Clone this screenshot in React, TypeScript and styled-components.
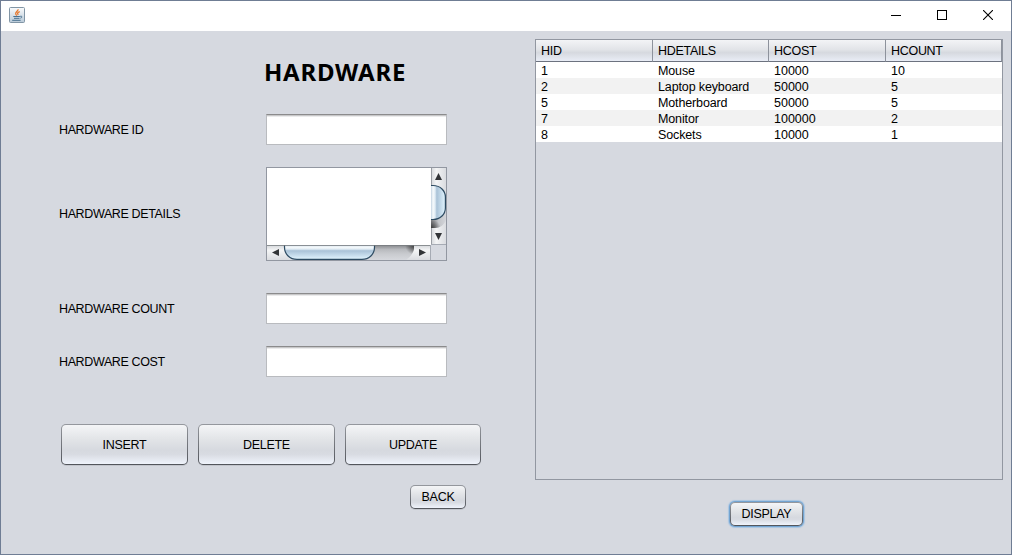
import React from "react";
import styled, { createGlobalStyle } from "styled-components";

const GlobalStyle = createGlobalStyle`
  *, *::before, *::after { box-sizing: border-box; }
  body { margin: 0; }
`;

const Window = styled.div`
  width: 1012px;
  height: 555px;
  display: flex;
  flex-direction: column;
  border: 1px solid #6f7d94;
  background: #d6d9e0;
  color: #000;
  font: 12.5px/16px "Liberation Sans", Arial, sans-serif;
  letter-spacing: -0.37px;
`;

const TitleBar = styled.header`
  flex: none;
  height: 30px;
  display: flex;
  justify-content: space-between;
  background: #fff;
  padding-left: 8px;

  > svg { margin-top: 6px; }
`;

const WindowControls = styled.div`
  display: flex;
`;

const ControlButton = styled.button`
  width: 46px;
  height: 28px;
  padding: 0;
  border: 0;
  background: none;
  display: grid;
  place-items: center;
`;

const Content = styled.main`
  flex: 1;
  display: flex;
`;

const FormPane = styled.section`
  width: 534px;
  padding-left: 58px;
`;

const Heading = styled.h1`
  margin: 25px 0 26px 205px;
  height: 32px;
  font: bold 24px/32px "Noto Sans", Tahoma, sans-serif;
  letter-spacing: 0.75px;
  white-space: nowrap;
`;

const FormRow = styled.div<{ $gap: number }>`
  display: flex;
  align-items: center;
  margin-bottom: ${(p) => p.$gap}px;
`;

const Label = styled.label`
  width: 207px;
  white-space: nowrap;
`;

const TextField = styled.input`
  width: 181px;
  height: 31px;
  border: 1px solid #b9bbbf;
  border-top-color: #8b8b8c;
  border-radius: 0;
  outline: 0;
  padding: 0 6px;
  background: linear-gradient(#c8c8c9 0 1px, #ebebec 1px 2px, #fff 2px);
  font: inherit;
`;

const ScrollPane = styled.div`
  width: 181px;
  height: 94px;
  border: 1px solid #9297a1;
  display: grid;
  grid-template: 77px 15px / 164px 15px;

  > svg { display: block; }
`;

const TextArea = styled.textarea`
  width: 164px;
  height: 77px;
  border: 0;
  outline: 0;
  padding: 0;
  resize: none;
  overflow: hidden;
  background: #fff;
  font: inherit;
`;

const ButtonRow = styled.div`
  display: flex;
  gap: 10px;
  padding-left: 2px;
`;

const BackRow = styled.div`
  margin: 20px 0 0 351px;
`;

const Button = styled.button<{ $width: number; $height: number; $focused?: boolean }>`
  display: block;
  width: ${(p) => p.$width}px;
  height: ${(p) => p.$height}px;
  padding: 0;
  border: 1px solid transparent;
  border-radius: 5px;
  color: #000;
  font: inherit;
  letter-spacing: -0.3px;
  white-space: nowrap;
  background:
    linear-gradient(#f4f5f7 0%, #e3e5e8 35%, #d6d9df 65%, #d8dbe2 75%, #eff3fb 100%) padding-box,
    linear-gradient(#95989e, #52555b) border-box;
  box-shadow: ${(p) => (p.$focused ? "0 0 0 1px #73a4d1, 0 0 1px 2px #a8c5e2" : "0 1px 0 #c2c5cc")};
`;

const DataPane = styled.section`
  padding-top: 8px;
  display: flex;
  flex-direction: column;
  align-items: flex-start;
`;

const TableFrame = styled.div`
  width: 468px;
  height: 441px;
  border: 1px solid #9297a1;
  margin-bottom: 22px;
`;

const Table = styled.table`
  width: 466px;
  table-layout: fixed;
  border-collapse: separate;
  border-spacing: 0;
`;

const HeaderCell = styled.th<{ $width: number }>`
  width: ${(p) => p.$width}px;
  height: 22px;
  padding: 1px 0 0 5px;
  line-height: 20px;
  text-align: left;
  font-weight: normal;
  letter-spacing: -0.3px;
  border-right: 1px solid #8d929c;
  border-bottom: 1px solid #6c727f;
  background: linear-gradient(#f3f4f6, #e2e4e8 45%, #d6d9df 60%, #e9edf6);
`;

const Row = styled.tr`
  background: #fff;
  &:nth-child(even) { background: #f2f2f2; }
`;

const Cell = styled.td<{ $spacing: number }>`
  height: 16px;
  padding: 2px 0 0 5px;
  line-height: 14px;
  letter-spacing: ${(p) => p.$spacing}px;
  white-space: nowrap;
`;

const DisplayHolder = styled.div`
  padding-left: 195px;
`;

const columns = [
  { title: "HID", width: 117 },
  { title: "HDETAILS", width: 116 },
  { title: "HCOST", width: 117 },
  { title: "HCOUNT", width: 116 },
];

const records = [
  ["1", "Mouse", "10000", "10"],
  ["2", "Laptop keyboard", "50000", "5"],
  ["5", "Motherboard", "50000", "5"],
  ["7", "Monitor", "100000", "2"],
  ["8", "Sockets", "10000", "1"],
];

const JavaIcon = () => (
  <svg width="16" height="16" viewBox="0 0 16 16" fill="none">
    <defs>
      <linearGradient id="javaTile" x1="0" y1="0" x2="0" y2="1">
        <stop offset="0" stopColor="#fafbfc" />
        <stop offset="1" stopColor="#b9cad8" />
      </linearGradient>
    </defs>
    <rect x="0.5" y="0.5" width="15" height="15" rx="1" fill="url(#javaTile)" stroke="#8195a5" />
    <path d="M9 2.200C9.800 4 4.400 5.400 7.800 8.600M10.800 4.600C8.600 5.400 8 6.200 9.200 8" stroke="#e7772b" strokeWidth="1.3" />
    <path d="M4.300 9.500h6.600M5 11.300h5.500M3.200 13.300h8.400M11.200 9.300c2.200-.5 2.300 1.300.2 1.900" stroke="#48708f" />
  </svg>
);

const VerticalScrollBar = () => (
  <svg width="15" height="77" viewBox="0 0 15 77" fill="none">
    <defs>
      <linearGradient id="vButton">
        <stop offset="0" stopColor="#d3d6da" />
        <stop offset="0.35" stopColor="#f4f5f6" />
        <stop offset="1" stopColor="#dadce0" />
      </linearGradient>
      <linearGradient id="vThumb">
        <stop offset="0" stopColor="#c3d3e1" />
        <stop offset="0.14" stopColor="#f6fafc" />
        <stop offset="0.28" stopColor="#e2edf5" />
        <stop offset="0.4" stopColor="#a9c2d7" />
        <stop offset="1" stopColor="#e2f5ff" />
      </linearGradient>
      <linearGradient id="vTrack">
        <stop offset="0" stopColor="#85878a" />
        <stop offset="0.5" stopColor="#c2c4c8" />
        <stop offset="1" stopColor="#d3d5da" />
      </linearGradient>
      <radialGradient id="vShade" gradientUnits="userSpaceOnUse" cx="0" cy="61" r="10">
        <stop offset="0" stopColor="#2b2b2b" stopOpacity="0.9" />
        <stop offset="1" stopColor="#2b2b2b" stopOpacity="0" />
      </radialGradient>
    </defs>
    <rect width="15" height="77" fill="url(#vButton)" />
    <path d="M0 44h15v8C13 57 9 60 4 60H0z" fill="url(#vTrack)" />
    <path d="M0 44h15v8C13 57 9 60 4 60H0z" fill="url(#vShade)" />
    <path d="M0 17.500h2C9.500 17.500 14.400 23 14.400 29v11C14.400 46 9.500 51.500 2 51.500H0z" fill="url(#vThumb)" />
    <path d="M0 17.500h2C9.500 17.500 14.400 23 14.400 29v11C14.400 46 9.500 51.500 2 51.500H0" stroke="#2d4b62" strokeWidth="1.2" />
    <path d="M0.500 0v17M0.500 60v17" stroke="#999da3" />
    <path d="M0 76.500h15" stroke="#a6abb4" />
    <path d="M7.500 5L11 12H4z" fill="#333538" />
    <path d="M7.500 72L4 65h7z" fill="#333538" />
  </svg>
);

const HorizontalScrollBar = () => (
  <svg width="164" height="15" viewBox="0 0 164 15" fill="none">
    <defs>
      <linearGradient id="hButton" x1="0" y1="0" x2="0" y2="1">
        <stop offset="0" stopColor="#d3d6da" />
        <stop offset="0.35" stopColor="#f4f5f6" />
        <stop offset="1" stopColor="#dadce0" />
      </linearGradient>
      <linearGradient id="hThumb" x1="0" y1="0" x2="0" y2="1">
        <stop offset="0" stopColor="#c3d3e1" />
        <stop offset="0.14" stopColor="#f6fafc" />
        <stop offset="0.28" stopColor="#e2edf5" />
        <stop offset="0.4" stopColor="#a9c2d7" />
        <stop offset="1" stopColor="#e2f5ff" />
      </linearGradient>
      <linearGradient id="hTrack" x1="0" y1="0" x2="0" y2="1">
        <stop offset="0" stopColor="#85878a" />
        <stop offset="0.3" stopColor="#b8babe" />
        <stop offset="0.6" stopColor="#c9cbcf" />
        <stop offset="1" stopColor="#d6d8dd" />
      </linearGradient>
      <radialGradient id="hShade" gradientUnits="userSpaceOnUse" cx="148" cy="0" r="10">
        <stop offset="0" stopColor="#2b2b2b" stopOpacity="0.9" />
        <stop offset="1" stopColor="#2b2b2b" stopOpacity="0" />
      </radialGradient>
    </defs>
    <rect width="164" height="15" fill="url(#hButton)" />
    <path d="M94 0h53v4C146 9 143 12 139 15H94z" fill="url(#hTrack)" />
    <path d="M94 0h53v4C146 9 143 12 139 15H94z" fill="url(#hShade)" />
    <path d="M17.500 0v2C17.500 9.500 23 14.400 30 14.400h65C102 14.400 107.500 9.500 107.500 2V0z" fill="url(#hThumb)" />
    <path d="M17.500 0v2C17.500 9.500 23 14.400 30 14.400h65C102 14.400 107.500 9.500 107.500 2V0" stroke="#2d4b62" strokeWidth="1.2" />
    <path d="M0 0.500h164" stroke="#777c80" strokeOpacity="0.8" />
    <path d="M163.500 0v15" stroke="#a6abb4" />
    <path d="M5 7.500L12 4v7z" fill="#333538" />
    <path d="M159 7.500L152 4v7z" fill="#333538" />
  </svg>
);

export default function App() {
  return (
    <>
      <GlobalStyle />
      <Window>
        <TitleBar>
          <JavaIcon />
          <WindowControls>
            <ControlButton aria-label="Minimize">
              <svg width="10" height="10"><path d="M0 5.500h10" stroke="#000" /></svg>
            </ControlButton>
            <ControlButton aria-label="Maximize">
              <svg width="10" height="10"><rect x="0.5" y="0.5" width="9" height="9" fill="none" stroke="#000" /></svg>
            </ControlButton>
            <ControlButton aria-label="Close">
              <svg width="10" height="10"><path d="M0 0l10 10M10 0L0 10" stroke="#000" strokeWidth="1.1" /></svg>
            </ControlButton>
          </WindowControls>
        </TitleBar>
        <Content>
          <FormPane>
            <Heading>HARDWARE</Heading>
            <FormRow $gap={22}>
              <Label htmlFor="hid">HARDWARE ID</Label>
              <TextField id="hid" />
            </FormRow>
            <FormRow $gap={32}>
              <Label htmlFor="details">HARDWARE DETAILS</Label>
              <ScrollPane>
                <TextArea id="details" />
                <VerticalScrollBar />
                <HorizontalScrollBar />
              </ScrollPane>
            </FormRow>
            <FormRow $gap={22}>
              <Label htmlFor="count">HARDWARE COUNT</Label>
              <TextField id="count" />
            </FormRow>
            <FormRow $gap={47}>
              <Label htmlFor="cost">HARDWARE COST</Label>
              <TextField id="cost" />
            </FormRow>
            <ButtonRow>
              <Button $width={127} $height={41}>INSERT</Button>
              <Button $width={137} $height={41}>DELETE</Button>
              <Button $width={136} $height={41}>UPDATE</Button>
            </ButtonRow>
            <BackRow>
              <Button $width={56} $height={24}>BACK</Button>
            </BackRow>
          </FormPane>
          <DataPane>
            <TableFrame>
              <Table>
                <thead>
                  <tr>
                    {columns.map((c) => (
                      <HeaderCell key={c.title} $width={c.width}>{c.title}</HeaderCell>
                    ))}
                  </tr>
                </thead>
                <tbody>
                  {records.map((record) => (
                    <Row key={record[0]}>
                      {record.map((value, i) => (
                        <Cell key={i} $spacing={i === 1 ? -0.13 : 0}>{value}</Cell>
                      ))}
                    </Row>
                  ))}
                </tbody>
              </Table>
            </TableFrame>
            <DisplayHolder>
              <Button $width={73} $height={24} $focused>DISPLAY</Button>
            </DisplayHolder>
          </DataPane>
        </Content>
      </Window>
    </>
  );
}
